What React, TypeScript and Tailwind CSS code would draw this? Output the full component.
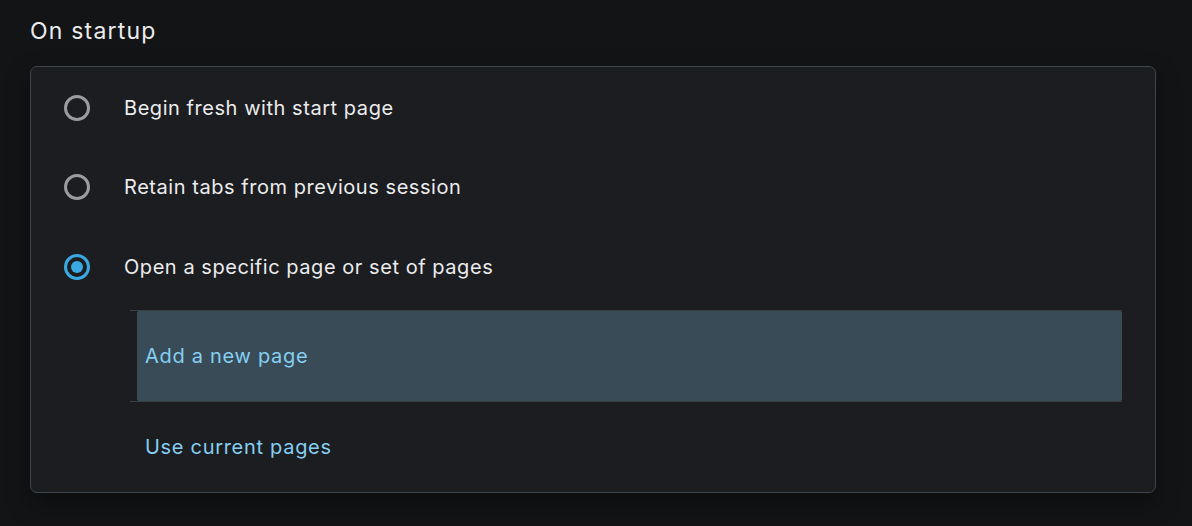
const options = [
  { label: "Begin fresh with start page", checked: false },
  { label: "Retain tabs from previous session", checked: false },
  { label: "Open a specific page or set of pages", checked: true },
];

function Radio({ checked }: { checked: boolean }) {
  if (checked) {
    return (
      <span className="flex h-[26px] w-[26px] items-center justify-center rounded-full border-[3px] border-[#3aa9e3]">
        <span className="h-[12px] w-[12px] rounded-full bg-[#3aa9e3]" />
      </span>
    );
  }
  return <span className="h-[26px] w-[26px] rounded-full border-[3px] border-[#9b9c9e]" />;
}

export default function App() {
  return (
    <div
      className="h-[526px] w-[1192px] bg-[#131416] px-[30px] pt-[15px] text-[#e8e9ea]"
      style={{ fontFamily: "Inter, 'Noto Sans', sans-serif" }}
    >
      <h2 className="text-[23px] leading-[32px] font-normal tracking-[1.2px] text-[#ececec]">On startup</h2>
      <div className="mt-[19px] w-[1126px] rounded-[7px] border border-[#3f454c] bg-[#1b1d21] pt-[1px] shadow-[0_10px_24px_rgba(0,0,0,0.35)]">
        <div className="flex flex-col">
          {options.map((o) => (
            <label key={o.label} className="flex h-[80px] items-center first:h-[79px]">
              <span className="ml-[33px] flex w-[60px] items-center">
                <Radio checked={o.checked} />
              </span>
              <span className="text-[20px] tracking-[0.55px] text-[#ececed]">{o.label}</span>
            </label>
          ))}
        </div>
        <div className="ml-[99px] mr-[33px] mt-[3px] border-y border-[#3b3e43]">
          <div className="ml-[7px] flex h-[90px] items-center rounded-[2px] bg-[#384b56] pl-[8px]">
            <span className="text-[20px] tracking-[0.7px] text-[#86cff2]">Add a new page</span>
          </div>
        </div>
        <div className="ml-[114px] flex h-[90px] items-center">
          <span className="text-[20px] tracking-[0.7px] text-[#86cff2]">Use current pages</span>
        </div>
      </div>
    </div>
  );
}
